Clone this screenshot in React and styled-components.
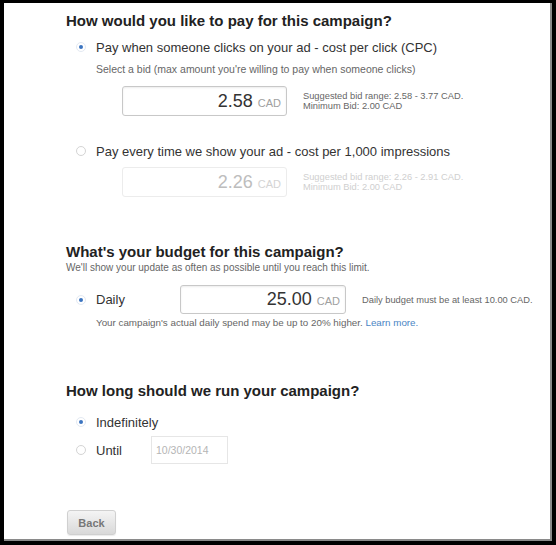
import React from 'react'
import styled, { createGlobalStyle } from 'styled-components'

const Global = createGlobalStyle`
  html, body {
    margin: 0;
    padding: 0;
    background: #000;
  }
  body {
    font-family: "Liberation Sans", Arial, sans-serif;
  }
`

const Frame = styled.div`
  width: 556px;
  height: 545px;
  box-sizing: border-box;
  padding: 3px 4px 4px 4px;
  background: #000;
`

const Panel = styled.div`
  height: 100%;
  box-sizing: border-box;
  background: #fff;
  border-right: 2px solid #8a8a8a;
  border-bottom: 2px solid #8a8a8a;
  padding-left: 62px;
  display: flex;
  flex-direction: column;
  align-items: flex-start;
`

const Heading = styled.h2`
  margin: ${p => p.$top}px 0 0 0;
  font-size: 15px;
  line-height: 18px;
  font-weight: bold;
  color: #222;
`

const Option = styled.label`
  display: flex;
  align-items: center;
  height: ${p => p.$height || 16}px;
  margin: ${p => p.$top}px 0 0 10px;
  font-size: 13px;
  color: #333;
`

const Radio = styled.span`
  width: 10px;
  height: 10px;
  box-sizing: border-box;
  border-radius: 50%;
  border: 1px solid ${p => (p.$checked ? '#e3e9f2' : '#d4d4d4')};
  background: #fff;
  display: flex;
  align-items: center;
  justify-content: center;
  margin-right: 10px;
  flex-shrink: 0;

  &::after {
    content: '';
    width: 4px;
    height: 4px;
    border-radius: 50%;
    background: ${p => (p.$checked ? '#3b74c0' : 'transparent')};
  }
`

const Label = styled.span`
  width: ${p => (p.$width ? `${p.$width}px` : 'auto')};
  white-space: nowrap;
`

const Small = styled.div`
  margin: ${p => p.$top}px 0 0 ${p => p.$left || 0}px;
  font-size: ${p => p.$size || 10}px;
  line-height: 12px;
  color: #666;
  white-space: nowrap;
`

const Link = styled.a`
  color: #4a86c5;
  text-decoration: none;
`

const BidRow = styled.div`
  display: flex;
  align-items: center;
  gap: 16px;
  margin: ${p => p.$top}px 0 0 ${p => p.$left || 0}px;
`

const Amount = styled.div`
  width: ${p => p.$width}px;
  height: ${p => p.$height}px;
  box-sizing: border-box;
  border: 1px solid ${p => (p.$disabled ? '#ececec' : '#c8c8c8')};
  border-radius: 3px;
  box-shadow: ${p => (p.$disabled ? 'none' : 'inset 0 1px 2px rgba(0,0,0,0.08)')};
  display: flex;
  align-items: baseline;
  justify-content: flex-end;
  padding: 0 5px 0 0;
  line-height: ${p => p.$height - 2}px;
`

const Value = styled.span`
  font-size: 18px;
  color: ${p => (p.$disabled ? '#bdbdbd' : '#333')};
`

const Unit = styled.span`
  font-size: 11px;
  margin-left: 5px;
  color: ${p => (p.$disabled ? '#d4d4d4' : '#a0a0a0')};
`

const Hint = styled.div`
  margin-left: ${p => p.$left || 0}px;
  font-size: 9.3px;
  line-height: 10px;
  color: ${p => (p.$disabled ? '#cfcfcf' : '#666')};
  white-space: nowrap;
`

const DateBox = styled.div`
  width: 77px;
  height: 28px;
  box-sizing: border-box;
  border: 1px solid #e6e6e6;
  display: flex;
  align-items: center;
  padding-left: 4px;
  font-size: 10.5px;
  color: #b5b5b5;
`

const BackButton = styled.button`
  margin: ${p => p.$top}px 0 0 1px;
  width: 49px;
  height: 25px;
  border: 1px solid #d0d0d0;
  border-radius: 3px;
  background: linear-gradient(#f4f4f4, #d9d9d9);
  box-shadow: 0 1px 1px rgba(0, 0, 0, 0.08);
  font-family: "Liberation Sans", Arial, sans-serif;
  font-size: 11px;
  font-weight: bold;
  color: #777;
  padding: 0;
`

function Bid({ value, range, min, disabled, top }) {
  return (
    <BidRow $top={top} $left={56}>
      <Amount $width={165} $height={30} $disabled={disabled}>
        <Value $disabled={disabled}>{value}</Value>
        <Unit $disabled={disabled}>CAD</Unit>
      </Amount>
      <Hint $disabled={disabled}>
        <div>Suggested bid range: {range}</div>
        <div>Minimum Bid: {min}</div>
      </Hint>
    </BidRow>
  )
}

export default function App() {
  return (
    <>
      <Global />
      <Frame>
        <Panel>
          <Heading $top={9}>How would you like to pay for this campaign?</Heading>
          <Option $top={9}>
            <Radio $checked />
            <Label>Pay when someone clicks on your ad - cost per click (CPC)</Label>
          </Option>
          <Small $top={8} $left={30} $size={10.5}>
            Select a bid (max amount you're willing to pay when someone clicks)
          </Small>
          <Bid top={11} value="2.58" range="2.58 - 3.77 CAD." min="2.00 CAD" />

          <Option $top={27}>
            <Radio />
            <Label>Pay every time we show your ad - cost per 1,000 impressions</Label>
          </Option>
          <Bid top={8} value="2.26" range="2.26 - 2.91 CAD." min="2.00 CAD" disabled />

          <Heading $top={46}>What's your budget for this campaign?</Heading>
          <Small $top={1}>We'll show your update as often as possible until you reach this limit.</Small>
          <Option $top={11} $height={29}>
            <Radio $checked />
            <Label $width={84}>Daily</Label>
            <Amount $width={166} $height={29}>
              <Value>25.00</Value>
              <Unit>CAD</Unit>
            </Amount>
            <Hint $left={16}>Daily budget must be at least 10.00 CAD.</Hint>
          </Option>
          <Small $top={3} $left={30} $size={9.8}>
            Your campaign's actual daily spend may be up to 20% higher. <Link>Learn more.</Link>
          </Small>

          <Heading $top={53}>How long should we run your campaign?</Heading>
          <Option $top={14}>
            <Radio $checked />
            <Label>Indefinitely</Label>
          </Option>
          <Option $top={6} $height={28}>
            <Radio />
            <Label $width={55}>Until</Label>
            <DateBox>10/30/2014</DateBox>
          </Option>

          <BackButton $top={46}>Back</BackButton>
        </Panel>
      </Frame>
    </>
  )
}
